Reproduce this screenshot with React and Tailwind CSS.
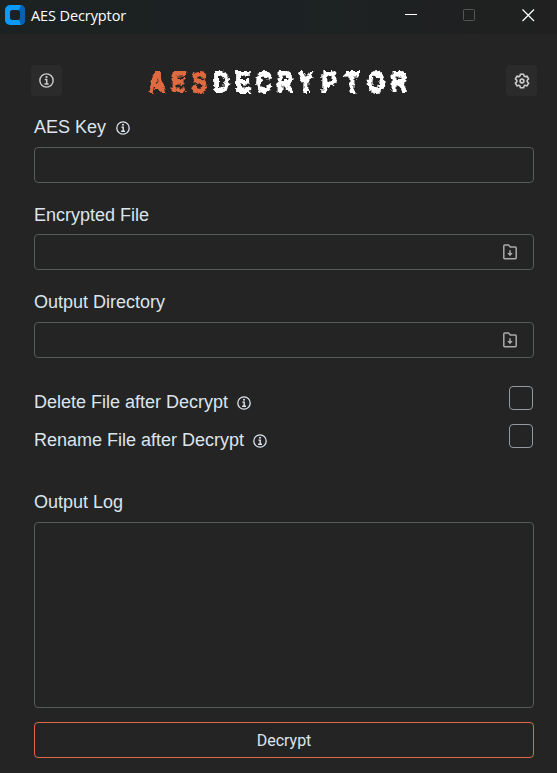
import React from 'react';

function InfoIcon({ size = 14, className = '' }) {
  return (
    <svg width={size} height={size} viewBox="0 0 14 14" fill="none" stroke="currentColor" className={className}>
      <circle cx="7" cy="7" r="6.2" strokeWidth="1.3" />
      <path d="M5.4 6.1H7.2V10M5.1 10.2H9" strokeWidth="1.4" />
      <rect x="6.1" y="2.9" width="1.8" height="1.7" fill="currentColor" stroke="none" />
    </svg>
  );
}

function GearIcon() {
  return (
    <svg width="16" height="16" viewBox="0 0 16 16" fill="none" stroke="currentColor" strokeWidth="1.6" strokeLinejoin="round">
      <path d="M6.4 1.2H9.6L10.1 3.1L11.1 3.7L13 3.1L14.6 5.9L13.2 7.3V8.7L14.6 10.1L13 12.9L11.1 12.3L10.1 12.9L9.6 14.8H6.4L5.9 12.9L4.9 12.3L3 12.9L1.4 10.1L2.8 8.7V7.3L1.4 5.9L3 3.1L4.9 3.7L5.9 3.1Z" />
      <circle cx="8" cy="8" r="1.9" />
    </svg>
  );
}

function FolderIcon() {
  return (
    <svg width="14" height="16" viewBox="0 0 14 16" fill="none" stroke="currentColor" strokeWidth="1.5" strokeLinejoin="round">
      <path d="M.8 1.9Q.8 .9 1.8 .9H5.5L7.3 3H12.2Q13.2 3 13.2 4V13.7Q13.2 14.7 12.2 14.7H1.8Q.8 14.7 .8 13.7Z" />
      <path d="M7 6.3V10" />
      <path d="M4.2 8.9H9.8L7 12.2Z" fill="currentColor" stroke="none" />
    </svg>
  );
}

function Logo() {
  return (
    <svg width="290" height="44" viewBox="0 0 290 44" role="img" aria-label="AES Decryptor" className="overflow-visible">
      <defs>
        <filter id="rough" x="0" y="0" width="290" height="44" filterUnits="userSpaceOnUse">
          <feTurbulence type="fractalNoise" baseFrequency="0.25" numOctaves="2" seed="12" result="n" />
          <feDisplacementMap in="SourceGraphic" in2="n" scale="6" xChannelSelector="R" yChannelSelector="G" result="d" />
          <feGaussianBlur in="d" stdDeviation="0.3" />
        </filter>
      </defs>
      <g filter="url(#rough)">
        <g transform="scale(0.76 1)" className="font-['Liberation_Sans',Arial,sans-serif] font-bold text-[29px]" textAnchor="middle" strokeWidth="2.2">
          <text y="33.5" x="23.6 51.9 79.5" fill="#df6b42" stroke="#df6b42">AES</text>
          <text y="33.5" x="108.6 136.8 164.5 192.1 219.7 250 280.2 311.8 342.1" fill="#fff" stroke="#fff">DECRYPTOR</text>
        </g>
      </g>
    </svg>
  );
}

function TitleBar() {
  return (
    <header className="flex h-[34px] shrink-0 items-start bg-linear-to-r from-[#1c2121] via-[#1c2223] to-[#202020] pl-[5px] pt-[5px]">
      <svg width="20" height="20" viewBox="0 0 20 20">
        <rect width="20" height="20" rx="5" fill="#0b9bf7" />
        <path d="M16 0Q20 1 20 5V15Q20 19 16 20L14 15V5Z" fill="#0860b0" />
        <rect x="5" y="5" width="10" height="10" rx="2.5" fill="#1c2121" />
      </svg>
      <h1 className="ml-[6px] w-[110px] whitespace-nowrap font-['Open_Sans',sans-serif] text-[14.5px] leading-[22px] tracking-[-0.1px] text-white">AES Decryptor</h1>
      <svg className="ml-auto mr-[22px] mt-[3px]" width="130" height="14" viewBox="0 0 130 14" fill="none">
        <path d="M0 6.5H12" stroke="#fff" />
        <rect x="58.5" y="1.5" width="11" height="11" rx="1" stroke="#555" />
        <path d="M117.5 1.5L129 13M129 1.5L117.5 13" stroke="#fff" strokeWidth="1.2" />
      </svg>
    </header>
  );
}

function Label({ children, info }) {
  return (
    <div className="flex h-6 items-center text-[18px] leading-6 text-[#dce4ee]">
      <span>{children}</span>
      {info && <InfoIcon className={info} />}
    </div>
  );
}

function Field({ browse }) {
  return (
    <div className="flex h-9 items-center justify-end rounded-[4px] border border-[#565b5e] pr-[16px] text-[#aaa]">
      {browse && <FolderIcon />}
    </div>
  );
}

function CheckRow({ children }) {
  return (
    <div className="flex h-[38px] items-start justify-between pr-px">
      <div className="pt-1"><Label info="ml-[9px] mt-[2px]">{children}</Label></div>
      <div className="size-6 rounded-[4px] border border-[#949a9f]" />
    </div>
  );
}

export default function App() {
  return (
    <div className="flex h-[773px] w-[557px] flex-col overflow-hidden bg-[#242424] font-['Liberation_Sans',Arial,sans-serif]">
      <TitleBar />
      <div className="mt-[31px] flex h-[31px] items-center justify-between pl-[31px] pr-[20px] text-[#ccc]">
        <button className="flex size-[31px] items-center justify-center rounded-[4px] bg-[#2b2b2b]"><InfoIcon size={15} /></button>
        <Logo />
        <button className="flex size-[31px] items-center justify-center rounded-[4px] bg-[#2b2b2b]"><GearIcon /></button>
      </div>
      <main className="flex flex-col pl-[34px] pr-[23px] pt-[19px]">
        <Label info="ml-[10px] mt-[2px]">AES Key</Label>
        <div className="mt-2"><Field /></div>
        <div className="mt-5"><Label>Encrypted File</Label></div>
        <div className="mt-[7px]"><Field browse /></div>
        <div className="mt-5"><Label>Output Directory</Label></div>
        <div className="mt-2"><Field browse /></div>
        <div className="mt-7">
          <CheckRow>Delete File after Decrypt</CheckRow>
          <CheckRow>Rename File after Decrypt</CheckRow>
        </div>
        <div className="mt-7"><Label>Output Log</Label></div>
        <div className="mt-2 h-[186px] rounded-[4px] border border-[#565b5e]" />
        <button className="mt-[14px] h-9 rounded-[4px] border border-[#df6b42] pt-[2px] font-[Roboto,sans-serif] text-[16px] text-[#dce4ee]">Decrypt</button>
      </main>
    </div>
  );
}
